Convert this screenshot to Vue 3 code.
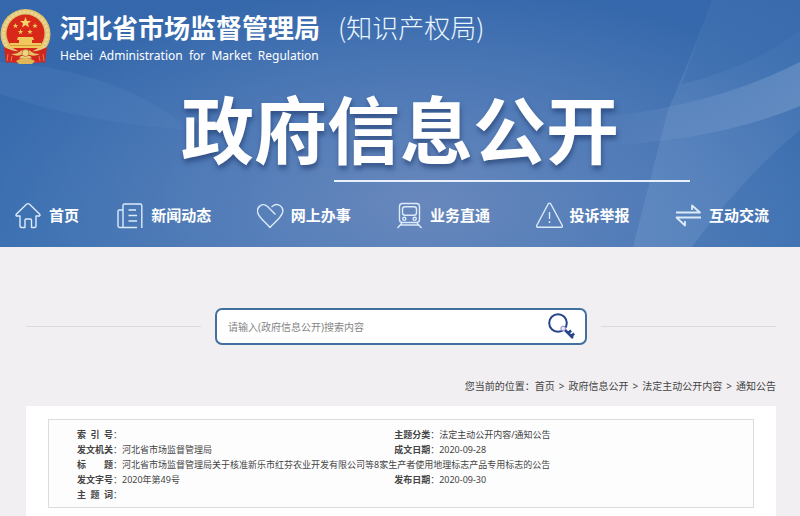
<script setup>
import { ref } from 'vue'

const keyword = ref('')

const navItems = [
  { name: 'home', label: '首页' },
  { name: 'news', label: '新闻动态' },
  { name: 'heart', label: '网上办事' },
  { name: 'train', label: '业务直通' },
  { name: 'warn', label: '投诉举报' },
  { name: 'swap', label: '互动交流' },
]

const crumbs = ['首页', '政府信息公开', '法定主动公开内容', '通知公告']

// 每行一组或两组字段
const rows = [
  [{ label: '索引号', value: '' }, { label: '主题分类', value: '法定主动公开内容/通知公告' }],
  [{ label: '发文机关', value: '河北省市场监督管理局' }, { label: '成文日期', value: '2020-09-28' }],
  [{ label: '标题', value: '河北省市场监督管理局关于核准新乐市红芬农业开发有限公司等8家生产者使用地理标志产品专用标志的公告' }],
  [{ label: '发文字号', value: '2020年第49号' }, { label: '发布日期', value: '2020-09-30' }],
  [{ label: '主题词', value: '' }],
]
</script>

<template>
  <div class="page">
    <header class="banner">
      <!-- 背景光带 -->
      <svg class="banner-bg" viewBox="0 0 800 247" preserveAspectRatio="none" aria-hidden="true">
        <defs>
          <linearGradient id="beam" x1="0" y1="1" x2="1" y2="0">
            <stop offset="0" stop-color="#7fa3d2" stop-opacity="0.3" />
            <stop offset="1" stop-color="#7fa3d2" stop-opacity="0.12" />
          </linearGradient>
          <linearGradient id="arc" x1="0" y1="0" x2="1" y2="0">
            <stop offset="0" stop-color="#8caad4" stop-opacity="0" />
            <stop offset="1" stop-color="#8caad4" stop-opacity="0.4" />
          </linearGradient>
        </defs>
        <path d="M633 247 L668 110 Q690 60 712 0 L800 0 V130 Q745 175 692 247Z" fill="url(#beam)" />
        <path d="M590 118 Q710 108 800 62 V106 Q720 140 600 146Z" fill="url(#arc)" />
        <path d="M712 0 H800 V30 Q750 68 682 84Z" fill="#3467a9" opacity="0.35" />
        <path d="M0 62 Q120 70 190 130 Q90 124 0 94Z" fill="#5d8ac4" opacity="0.22" />
      </svg>

      <div class="brand">
        <svg class="emblem" viewBox="0 0 51 56" role="img" aria-label="国徽">
          <path d="M7 40 L6 53 L17 54 L25 49 L34 54 L45 53 L44 40Z" fill="#d52b20" />
          <circle cx="25.500" cy="25" r="25" fill="#dfc270" />
          <circle cx="25.500" cy="25" r="22" fill="none" stroke="#ead692" stroke-width="3" stroke-dasharray="3 1" />
          <circle cx="25.500" cy="24.500" r="19" fill="#d72819" />
          <path d="M25.500 8 L27 12 H31 L28 14.500 L29 18.500 L25.500 16 L22 18.500 L23 14.500 L20 12 H24Z" fill="#f3d16b" />
          <g fill="#f0c95c">
            <path id="star" d="M15.500 14 L16.200 16 H18.200 L16.600 17.200 L17.200 19.200 L15.500 18 L13.800 19.200 L14.400 17.200 L12.800 16 H14.800Z" />
            <use href="#star" x="19.500" />
            <use href="#star" x="5" y="6" />
            <use href="#star" x="14.500" y="6" />
            <path d="M18 28 H33 L34 31 H17Z M19 31 H32 V34 H19Z M10 34 H41 L43 39 H8Z" />
          </g>
          <path d="M10 36.500 H41" stroke="#d99a3a" stroke-width="1" />
          <path d="M4 38 Q14 43 19 42 L25.500 39.500 L32 42 Q38 43 47 38 L45 54 Q39 51 35 52 L30 47 H21 L16 52 Q11 51 6 54Z" fill="#cf261d" />
          <path d="M11 45 Q18 45 21 41.500 H30 Q33 45 40 45 Q34 48 30 46 H21 Q17 48 11 45Z" fill="#e6c266" />
          <circle cx="25.500" cy="44" r="3.500" fill="#edd486" stroke="#c9872f" />
          <path d="M16 52 Q25 46 35 52 L32 55 H19Z" fill="#dfb757" />
          <path d="M8 45 L7 52 M12 47 L11 52 M43 45 L44 52 M39 47 L40 52" stroke="#ee7a51" fill="none" />
        </svg>
        <div class="brand-text">
          <h1 class="org">河北省市场监督管理局</h1>
          <p class="org-en">Hebei&nbsp; Administration&nbsp; for&nbsp; Market&nbsp; Regulation</p>
        </div>
        <span class="org-sub">(知识产权局)</span>
      </div>

      <h2 class="headline">政府信息公开</h2>
      <div class="headline-rule"></div>

      <nav class="nav">
        <a v-for="item in navItems" :key="item.name" class="nav-item" href="#">
          <svg class="nav-icon" viewBox="0 0 27 27" aria-hidden="true">
            <template v-if="item.name === 'home'">
              <path d="M5 14 H1.500 Q.5 13.500 1.500 12 L11.500 2.200 Q13 1 14.500 2.200 L24.500 12 Q25.500 13.500 24.500 14 H21 V24 Q21 25.500 19.500 25.500 H16.500 V18 Q16.500 17 15.500 17 H11 Q10 17 10 18 V25.500 H6.500 Q5 25.500 5 24Z" />
            </template>
            <template v-else-if="item.name === 'news'">
              <path d="M20 25.500 H3 Q1 25.500 1 23.500 V9.500 Q1 8 2.500 8 H6 M6 25 V3.500 Q6 2 7.500 2 H23 Q24.800 2 24.800 3.500 V26" />
              <path d="M11.500 8 H19 M11.500 13.500 H20 M11.500 19 H20" />
            </template>
            <template v-else-if="item.name === 'heart'">
              <path d="M18.500 12.500 L10.500 4.500 C5.500 0 -1 5 .8 11 C2 15.500 7.500 19.500 13 25.500 C18 20 24 16 25.600 10.500 C27 5 21 .5 16.500 3.500 L14.500 5" />
            </template>
            <template v-else-if="item.name === 'train'">
              <rect x="3.500" y="1.500" width="20" height="19" rx="3" />
              <rect x="6.500" y="4.800" width="14" height="8.500" rx="2.500" />
              <circle cx="8.300" cy="16.800" r="1.600" />
              <circle cx="18.700" cy="16.800" r="1.600" />
              <path d="M6 21 L1.500 26 M21 21 L25.500 26 M4.500 23 H22.500" />
            </template>
            <template v-else-if="item.name === 'warn'">
              <path d="M12.200 2 Q13.500 .3 14.800 2 L26.300 23.500 Q26.800 25.300 25.300 25.300 H1.700 Q.2 25.300 .7 23.500Z" />
              <path d="M13.500 10 V17 M13.500 19 V21" />
            </template>
            <template v-else>
              <path d="M1 10.500 H25 L17 3.500 V8 M26 15.500 H1.500 L10 23.500 V19" stroke-width="1.800" />
            </template>
          </svg>
          <span>{{ item.label }}</span>
        </a>
      </nav>
    </header>

    <main class="main">
      <form class="search" @submit.prevent>
        <div class="search-box">
          <input v-model="keyword" class="search-input" type="text" placeholder="请输入(政府信息公开)搜索内容" aria-label="搜索内容" />
          <button class="search-btn" type="submit" aria-label="搜索">
            <svg viewBox="0 0 27 27" fill="none" aria-hidden="true">
              <circle cx="10" cy="10" r="8.800" stroke="#26458b" stroke-width="2" />
              <path d="M15.500 15.500 L25 25 M20 20 L23.200 17.600 M23 23 L26.200 20.600" stroke="#26458b" stroke-width="2.600" />
              <circle cx="15.200" cy="15.500" r="2.400" fill="#e6e2f5" stroke="#8d8cc4" />
            </svg>
          </button>
        </div>
      </form>

      <nav class="crumbs" aria-label="当前位置">
        <span>您当前的位置：</span>
        <template v-for="(crumb, i) in crumbs" :key="crumb">
          <span v-if="i" class="crumb-sep">&gt;</span>
          <a href="#">{{ crumb }}</a>
        </template>
      </nav>

      <section class="sheet">
        <div class="meta">
          <table>
            <colgroup>
              <col class="col-label" />
              <col class="col-value" />
              <col class="col-label" />
              <col />
            </colgroup>
            <tbody>
              <tr v-for="(row, i) in rows" :key="i">
                <template v-for="field in row" :key="field.label">
                  <th scope="row"><span class="label">{{ field.label }}</span>：</th>
                  <td :colspan="row.length === 1 ? 3 : 1">{{ field.value }}</td>
                </template>
              </tr>
            </tbody>
          </table>
        </div>
      </section>
    </main>
  </div>
</template>

<style>
body {
  margin: 0;
  background: #f1eff2;
}
</style>

<style scoped>
.page {
  display: flex;
  flex-direction: column;
  min-height: 100vh;
  font-family: "Noto Sans", "Noto Sans CJK SC", sans-serif;
  color: #444;
}
a {
  color: inherit;
  text-decoration: none;
}

/* 头部 */
.banner {
  position: relative;
  padding-bottom: 17px;
  background:
    radial-gradient(ellipse 56% 90% at 53% 82%, rgba(112, 140, 190, 0.85), rgba(100, 135, 190, 0.6) 45%, rgba(80, 120, 180, 0) 100%),
    linear-gradient(#3467ab, #3b70b1);
  color: #fff;
}
.banner-bg {
  position: absolute;
  inset: 0;
  width: 100%;
  height: 100%;
}
.brand,
.headline,
.headline-rule,
.nav {
  position: relative;
}
.brand {
  display: flex;
  align-items: flex-start;
  padding-top: 9px;
}
.emblem {
  width: 51px;
  height: 56px;
}
.brand-text {
  margin-left: 9px;
}
.org {
  margin: 0;
  font-size: 26px;
  line-height: 38px;
  font-weight: 700;
}
.org-en {
  margin: 0;
  font-size: 12px;
  line-height: 18px;
}
.org-sub {
  margin-left: 18px;
  font-family: "Noto Sans CJK SC", sans-serif;
  font-size: 26px;
  line-height: 36px;
  font-weight: 300;
  color: #eaf6ff;
}
.headline {
  margin: 15px 0 0;
  font-size: 73px;
  line-height: 100px;
  font-weight: 700;
  text-align: center;
  text-shadow: 1px 4px 5px rgba(30, 55, 105, 0.6);
}
.headline-rule {
  width: 356px;
  height: 2px;
  margin-left: auto;
  margin-right: 110px;
  background: #e8f0fb;
}
.nav {
  display: grid;
  grid-template-columns: 11fr repeat(4, 15fr) auto;
  margin-top: 18px;
  padding: 0 31px 0 15px;
}
.nav-item {
  display: flex;
  align-items: center;
  gap: 7px;
  font-size: 15px;
  line-height: 30px;
  font-weight: 700;
  white-space: nowrap;
}
.nav-icon {
  width: 27px;
  height: 27px;
  fill: none;
  stroke: #dcebfa;
  stroke-width: 1.4;
  stroke-linejoin: round;
}

/* 搜索 */
.main {
  display: flex;
  flex-direction: column;
  flex: 1;
  padding: 61px 24px 0 26px;
}
.search {
  display: flex;
  align-items: center;
  gap: 14px;
}
.search::before,
.search::after {
  content: "";
  flex: 1;
  height: 1px;
  background: #dcdadd;
}
.search-box {
  display: flex;
  align-items: center;
  box-sizing: border-box;
  width: 372px;
  height: 37px;
  padding: 0 10px 0 11px;
  border: 2px solid #42719f;
  border-radius: 7px;
  background: #fff;
}
.search-input {
  flex: 1;
  min-width: 0;
  padding: 0;
  border: 0;
  outline: 0;
  background: none;
  font-family: inherit;
  font-size: 10px;
  color: #444;
}
.search-input::placeholder {
  color: #858585;
}
.search-btn {
  width: 27px;
  height: 27px;
  padding: 0;
  border: 0;
  background: none;
  cursor: pointer;
}
.search-btn svg {
  display: block;
}

.crumbs {
  display: flex;
  justify-content: flex-end;
  margin-top: 33px;
  font-size: 10px;
  line-height: 16px;
}
.crumb-sep {
  margin: 0 4px;
}

/* 公文信息 */
.sheet {
  flex: 1;
  margin-top: 12px;
  padding: 13px 22px 8px;
  background: #fff;
}
.meta {
  padding: 7px 28px 5px;
  border: 1px solid #dcdcdc;
  background: #fdfdfd;
}
table {
  width: 100%;
  border-collapse: collapse;
  table-layout: fixed;
  font-size: 9px;
  line-height: 15px;
}
.col-label {
  width: 45px;
}
.col-value {
  width: 42%;
}
th,
td {
  padding: 0;
  text-align: left;
  white-space: nowrap;
}
th {
  font-weight: 400;
}
.label {
  display: inline-block;
  width: 36px;
  font-weight: 700;
  text-align: justify;
  text-align-last: justify;
  text-justify: inter-character;
}
</style>
